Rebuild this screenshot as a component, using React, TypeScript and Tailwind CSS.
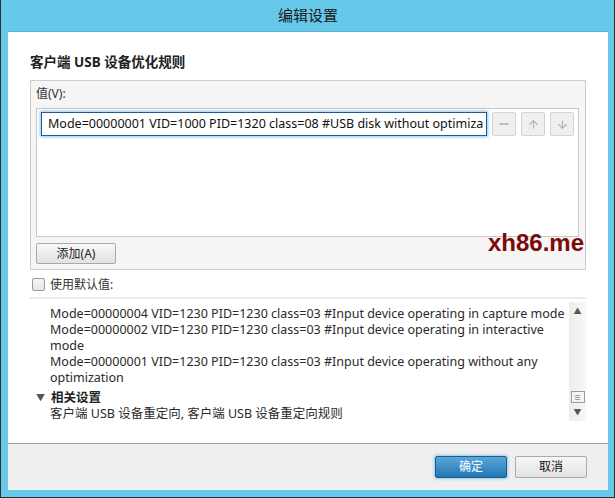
import { ArrowUp, ArrowDown, Minus } from "lucide-react";

const font = "font-['Noto_Sans','Noto_Sans_CJK_SC',sans-serif]";

const rules = [
  "Mode=00000004 VID=1230 PID=1230 class=03 #Input device operating in capture mode",
  "Mode=00000002 VID=1230 PID=1230 class=03 #Input device operating in interactive mode",
  "Mode=00000001 VID=1230 PID=1230 class=03 #Input device operating without any optimization",
];

function SmallButton({ children }: { children: React.ReactNode }) {
  return (
    <div className="w-[24px] h-[24px] rounded-[2px] border border-[#d4d4d4] bg-[#efefef] flex items-center justify-center text-[#b0b0b0]">
      {children}
    </div>
  );
}

export default function App() {
  return (
    <div
      className={`${font} relative w-[615px] h-[498px] bg-[#66c9e9] border-x border-b border-[#2e2e2e] flex flex-col pl-[7px] pr-[6px] pb-[7px] text-[12px] text-[#1e1e1e]`}
    >
      {/* Title bar */}
      <div className="h-[31px] flex items-center justify-center text-[15px] text-[#1a1a1a] shrink-0">
        编辑设置
      </div>

      {/* Client area */}
      <div className="flex-1 flex flex-col bg-white border-t border-[#5fb3d2]">
        <div className="h-[411px] flex flex-col">
          <h2 className="mt-[21px] ml-[22px] text-[13.5px] leading-[18px] font-bold text-[#222]">
            客户端 USB 设备优化规则
          </h2>

          {/* Value panel */}
          <div className="mt-[9px] ml-[22px] w-[556px] border border-[#cccccc] bg-[#f5f5f5] px-[5px] pt-[5px] pb-[5px]">
            <div className="leading-[16px] text-[#333]">值(V):</div>
            <div className="mt-[6px] h-[129px] w-[543px] border border-[#c8c8c8] bg-white flex items-start gap-[5px] pl-[4px] pt-[3px]">
              <div className="w-[446px] h-[24px] border border-[#1b5c98] shadow-[0_0_3px_1px_rgba(80,150,210,0.6)] flex items-center pl-[6px] text-[#111] whitespace-nowrap overflow-hidden text-[12.5px]">
                Mode=00000001 VID=1000 PID=1320 class=08 #USB disk without optimiza
              </div>
              <div className="flex gap-[5px]">
                <SmallButton>
                  <Minus size={14} strokeWidth={2.5} />
                </SmallButton>
                <SmallButton>
                  <ArrowUp size={13} strokeWidth={2} />
                </SmallButton>
                <SmallButton>
                  <ArrowDown size={13} strokeWidth={2} />
                </SmallButton>
              </div>
            </div>
            <div className="mt-[6px] w-[80px] h-[21px] rounded-[2px] border border-[#a9a9a9] bg-gradient-to-b from-[#f8f8f8] to-[#e2e2e2] flex items-center justify-center text-[#222]">
              添加(A)
            </div>
          </div>

          {/* Default checkbox */}
          <div className="mt-[8px] ml-[24px] flex items-center gap-[5px] h-[13px]">
            <div className="w-[13px] h-[13px] rounded-[2px] border border-[#9a9a9a] bg-gradient-to-b from-[#f4f4f4] to-[#e6e6e6]" />
            <span className="text-[#333]">使用默认值:</span>
          </div>

          <div className="mt-[6px] ml-[22px] w-[556px] h-[2px] bg-[#ececec]" />

          {/* Explain area */}
          <div className="ml-[22px] w-[556px] h-[122px] flex text-[12.5px]">
            <div className="flex-1 pl-[20px] pt-[7px] pr-[2px] leading-[16px] text-[#2a2a2a] overflow-hidden">
              {rules.map((r) => (
                <div key={r}>{r}</div>
              ))}
              <div className="mt-[4px] -ml-[14px] flex items-center gap-[6px] font-bold text-[#222]">
                <span className="text-[9px] text-[#555]">▼</span>
                <span>相关设置</span>
              </div>
              <div>客户端 USB 设备重定向, 客户端 USB 设备重定向规则</div>
            </div>
            <div className="w-[17px] mt-[3px] bg-gradient-to-r from-[#ececec] to-[#f8f8f8] flex flex-col items-center justify-between py-[4px] text-[#555]">
              <span className="text-[8px] leading-[10px]">▲</span>
              <div className="flex flex-col items-center gap-[4px] w-full">
                <div className="w-[14px] h-[12px] border border-[#9c9c9c] bg-[#f4f4f4] flex items-center justify-center text-[7px] leading-none">
                  ≡
                </div>
                <span className="text-[8px] leading-[10px]">▼</span>
              </div>
            </div>
          </div>
        </div>

        {/* Footer */}
        <div className="flex-1 border-t border-[#a0a0a0] bg-[#efefef] flex justify-end items-start pt-[12px] pr-[21px] gap-[8px]">
          <div className="w-[72px] h-[22px] rounded-[2px] border border-[#1d5c8f] bg-gradient-to-b from-[#5aa7d8] to-[#1f78b4] shadow-[0_0_3px_1px_rgba(100,170,220,0.6)] flex items-center justify-center text-white">
            确定
          </div>
          <div className="w-[72px] h-[22px] rounded-[2px] border border-[#ababab] bg-gradient-to-b from-[#f6f6f6] to-[#e3e3e3] flex items-center justify-center text-[#111]">
            取消
          </div>
        </div>
      </div>

      {/* Watermark */}
      <div className="absolute left-[487px] top-[231px] whitespace-nowrap text-[24px] leading-[24px] font-bold text-[#7d0a0a] font-['Liberation_Sans',sans-serif]">
        xh86.me
      </div>
    </div>
  );
}
